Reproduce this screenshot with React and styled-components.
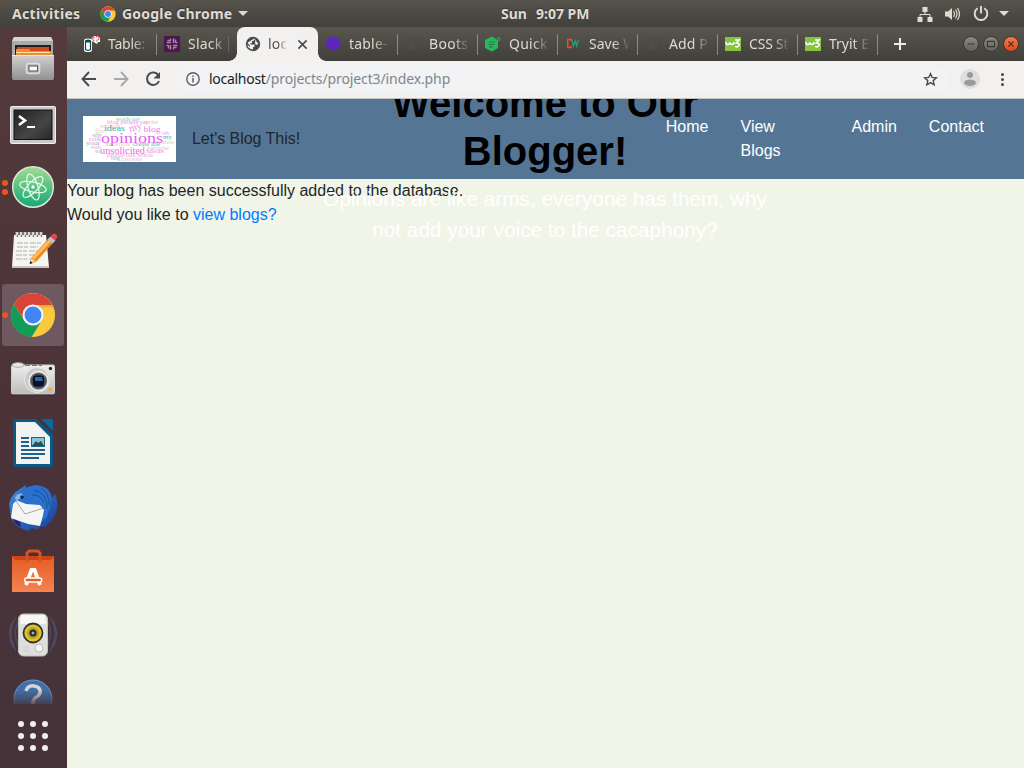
import React from 'react';
import styled, { createGlobalStyle } from 'styled-components';

const Global = createGlobalStyle`
  * { box-sizing: border-box; }
  html, body { margin: 0; height: 100%; overflow: hidden; }
  svg { display: block; flex: none; }
`;
const ui = `"Noto Sans", "Open Sans", sans-serif`;
const arial = `"Liberation Sans", Arial, sans-serif`;

const Desktop = styled.div`
  width: 1024px; height: 768px; display: flex; flex-direction: column; overflow: hidden;
  background: #4a343a; font-family: ${ui};
`;
const TopBar = styled.header`
  height: 27px; flex: none; display: grid; grid-template-columns: 489px 92px 1fr; align-items: center;
  padding: 0 15px 0 12px; background: linear-gradient(#57544c, #41403b);
  color: #dfdbd2; font-size: 14px; font-weight: 700; text-shadow: 0 -1px 1px rgba(0,0,0,.35);
`;
const BarGroup = styled.div`
  display: flex; align-items: center; height: 27px; justify-content: ${p => p.$end ? 'flex-end' : 'flex-start'};
`;
const BarText = styled.span`
  white-space: pre; line-height: 27px; letter-spacing: ${p => p.$ls || 0}px; width: ${p => p.$w}px;
  margin-left: ${p => p.$ml || 0}px; flex: none;
`;
const Clock = styled.div`display: flex;`;
const Caret = styled.i`
  border: 5px solid transparent; border-top-color: #dfdbd2; border-bottom: 0; margin-left: ${p => p.$ml}px;
`;
const Status = styled.div`display: flex; align-items: center; gap: 12px;`;
const Main = styled.div`display: flex; flex: 1; min-height: 0;`;
const Dock = styled.aside`
  width: 67px; flex: none; display: flex; flex-direction: column; padding-top: 1px;
  background: linear-gradient(#543a3b, #4a3238 55%, #45333a);
`;
const DockList = styled.div`
  height: 676px; overflow: hidden; display: flex; flex-direction: column; gap: 2px; padding-left: 2px;
`;
const DockItem = styled.div`
  width: 62px; height: 62px; flex: none; border-radius: 3px; position: relative;
  display: flex; align-items: center; justify-content: center;
  background: ${p => p.$active ? '#6e5960' : 'transparent'};
  mask-image: ${p => p.$faded ? 'linear-gradient(#000 22px, transparent 40px)' : 'none'};
`;
const Running = styled.div`
  position: absolute; left: 0; top: 28px; display: flex; flex-direction: column; gap: 3px;
  margin-top: ${p => p.$two ? -4 : 0}px;
  i { width: 6px; height: 6px; border-radius: 50%; background: #e9541f; }
`;
const AppsGrid = styled.div`
  display: grid; grid-template-columns: repeat(3, 6px); gap: 6px; padding: 17px 0 0 18px;
  i { width: 6px; height: 6px; border-radius: 50%; background: #f2efef; }
`;
const Browser = styled.div`width: 957px; display: flex; flex-direction: column;`;
const TabStrip = styled.div`
  height: 34px; flex: none; display: flex; padding-left: 10px;
  background: linear-gradient(#5a564e, #403f3a);
`;
const TabBox = styled.div`
  width: ${p => p.$active ? 81 : 80}px; height: 34px; padding-left: ${p => p.$active ? 8 : 7}px; display: flex; align-items: center; gap: ${p => p.$active ? 7 : 8}px;
  position: relative; color: ${p => p.$active ? '#55534f' : '#dfdbd2'};
  background: ${p => p.$active ? '#f2f1f0' : 'transparent'};
  border-radius: 8px 8px 0 0; font-size: 14px;
  ${p => p.$active && `
    &::before, &::after { content: ''; position: absolute; bottom: 0; width: 8px; height: 8px; }
    &::before { left: -8px; background: radial-gradient(circle at 0 0, transparent 7.5px, #f2f1f0 8px); }
    &::after { right: -8px; background: radial-gradient(circle at 100% 0, transparent 7.5px, #f2f1f0 8px); }
    z-index: 1;
  `}
`;
const TabText = styled.span`
  flex: none; width: ${p => p.$active ? 22 : 41}px; overflow: hidden; white-space: pre; line-height: 32px; letter-spacing: ${p => p.$ls || 0}px;
  mask-image: linear-gradient(90deg, #000 ${p => p.$active ? 45 : 58}%, transparent ${p => p.$active ? 90 : 100}%);
`;
const TabLine = styled.i`position: absolute; right: 0; top: 7px; width: 1px; height: 21px; background: #8d8a83;
  ${p => p.$dim && 'right: 8px; top: 9px; height: 16px; opacity: .45;'}`;
const NewTab = styled.div`width: 44px; display: flex; align-items: center; justify-content: center;`;
const WindowButtons = styled.div`display: flex; align-items: center; gap: 4px; margin-left: auto; padding-right: 5px;`;
const WinButton = styled.div`
  width: 16px; height: 16px; border-radius: 50%; border: 1px solid #393833;
  background: ${p => p.$close ? 'linear-gradient(#f47c50,#dd4b19)' : 'linear-gradient(#8b8981,#64625c)'};
  display: flex; align-items: center; justify-content: center;
`;
const Toolbar = styled.div`
  height: 38px; flex: none; display: flex; align-items: center; background: #f2f1f0;
  border-bottom: 1px solid #c4c2bf; padding: 0 13px 1px 14px;
`;
const NavIcons = styled.div`display: flex; gap: 16px; margin-right: 14px;`;
const Address = styled.div`
  width: 773px; height: 28px; border-radius: 14px; background: #f1f3f4;
  display: flex; align-items: center; padding: 0 10px 0 11px; font-size: 14px; color: #80868b;
  b { color: #202124; font-weight: 400; letter-spacing: -0.28px; }
  span { margin-left: 9px; flex: 1; white-space: pre; letter-spacing: -0.11px; line-height: 28px; }
`;
const ToolEnd = styled.div`display: flex; align-items: center; gap: 15px; margin-left: auto;`;
const Page = styled.main`
  flex: 1; position: relative; overflow: hidden; background: #f1f5e7; font: 16px/24px ${arial}; color: #212529;
`;
const SiteNav = styled.nav`
  height: 80px; background: #557594; display: flex; align-items: flex-start; padding: 16px 24px 0 16px;
`;
const Brand = styled.div`display: flex; gap: 16px; align-items: center; padding-top: 1px; letter-spacing: -0.03px;`;
const Links = styled.div`display: flex; margin-left: auto; color: #fff;`;
const NavLink = styled.a`padding: 0 16px; width: ${p => p.$w ? p.$w + 'px' : 'auto'};`;
const Hero = styled.section`
  position: absolute; left: 238.5px; top: -20px; width: 479px; text-align: center;
  h1 { margin: 0 60px 8px; font-size: 40px; line-height: 48px; font-weight: 700; color: #000; }
  p { margin: 0; font-size: 20.8px; line-height: 31.2px; color: #fff; padding: 0 10px; }
`;
const Message = styled.div`a { color: #007bff; }`;

const Chrome = ({ s }) => (
  <svg width={s} height={s} viewBox="0 0 48 48">
    <circle cx="24" cy="24" r="23" fill="#fcc93d" />
    <path d="M4.100 12.500A23 23 0 0 1 44.200 13.500H24L14.500 29z" fill="#da4437" />
    <path d="M4.100 12.500A23 23 0 0 0 22.500 47L33 30 24 34.500 15 30z" fill="#119d58" />
    <path d="M24 13.500h20.200l1 2.500H30z" fill="#c49a24" opacity=".5" />
    <circle cx="24" cy="24" r="11" fill="#f5f5f5" />
    <circle cx="24" cy="24" r="8.800" fill="#4285f4" />
  </svg>
);
const Files = () => (
  <svg width="46" height="48" viewBox="0 0 46 48">
    <defs><linearGradient id="metal" x2="0" y2="1"><stop stopColor="#d0d0d0" /><stop offset="1" stopColor="#929292" /></linearGradient></defs>
    <path d="M4 2h37l2 4v37H2V6z" fill="#aaa" /><path d="M4 2h37l2 4H2z" fill="#d5d5d5" />
    <path d="M5 10h36v13H5z" fill="#242020" /><path d="M7 12h32v4H7z" fill="#cf4a1d" />
    <path d="M6 14h13l2 2h20v7H6z" fill="#f28b35" /><path d="M6 17h34v1H6z" fill="#ffe0a2" />
    <path d="M2 20h42v23l-1 2H3l-1-2z" fill="url(#metal)" /><path d="M2 20h42v1H2z" fill="#e9e9e9" />
    <rect x="16.500" y="28.500" width="13" height="10" rx="2" fill="#b9b9b9" stroke="#dedede" strokeWidth="1.500" />
    <rect x="19" y="31" width="8.500" height="5" fill="#fafafa" stroke="#555" />
  </svg>
);
const Terminal = () => (
  <svg width="46" height="42" viewBox="0 -4 46 42"><defs><linearGradient id="term" x2="1" y2="1"><stop stopColor="#222" /><stop offset=".6" stopColor="#454545" /><stop offset="1" stopColor="#292929" /></linearGradient></defs>
    <rect x=".5" y=".5" width="45" height="37" rx="1" fill="#c9c9c9" stroke="#f0f0f0" />
    <rect x="4" y="4" width="38" height="29.500" fill="url(#term)" stroke="#111" />
    <path d="M9 10l6 4.500-6 4.500" fill="none" stroke="#fff" strokeWidth="2.600" /><path d="M17 21h8" stroke="#fff" strokeWidth="2" />
  </svg>
);
const Atom = () => (
  <svg width="44" height="44" viewBox="0 0 44 44"><defs><linearGradient id="atom" x2="0" y2="1"><stop stopColor="#a3dc90" /><stop offset="1" stopColor="#10a875" /></linearGradient></defs>
    <circle cx="22" cy="22" r="20.300" fill="url(#atom)" stroke="#e1e3dd" strokeWidth="1.500" />
    <g fill="none" stroke="#e9fbef" strokeWidth="1.200">
      <ellipse cx="22" cy="22" rx="13.500" ry="5" transform="rotate(13 22 22)" />
      <ellipse cx="22" cy="22" rx="13.500" ry="5" transform="rotate(73 22 22)" />
      <ellipse cx="22" cy="22" rx="13.500" ry="5" transform="rotate(133 22 22)" />
    </g><circle cx="22" cy="22" r="1.700" fill="#fff" />
  </svg>
);
const Notes = () => (
  <svg width="48" height="40" viewBox="0 0 48 40">
    <path d="M5 4h32l3 32H3z" fill="#f5f5f2" /><path d="M3 35h37v2H3z" fill="#c5c5bf" />
    <path d="M8 1v5m4-5v5m4-5v5m4-5v5m4-5v5m4-5v5m4-5v5" stroke="#d5d5d2" strokeWidth="2.800" /><path d="M8 5h26" stroke="#777" strokeDasharray="1 3" strokeWidth="2" />
    <path d="M8 12h24M8 16h21M7 20h22M7 24h18M7 28h20" stroke="#b0b0b0" strokeDasharray="6 1 4 2" />
    <path d="M22 27L40 7l5 4-18 20-6 2z" fill="#e98a28" /><path d="M24 27.500L42 8.500" stroke="#ffbd59" strokeWidth="3" />
    <path d="M38.500 8.500l3-3 5 4-3 3z" fill="#bcc2c3" /><path d="M41.500 5.500l3-3q4 0 4 4l-2.500 3z" fill="#ed4149" />
    <path d="M22 27l5 3.500-6 2z" fill="#f6d29d" /><path d="M20.500 33l1-3 2 2z" fill="#111" />
  </svg>
);
const Camera = () => (
  <svg width="46" height="34" viewBox="0 1 46 34"><defs><linearGradient id="cam" x2="0" y2="1"><stop stopColor="#eee" /><stop offset="1" stopColor="#bcbcba" /></linearGradient></defs>
    <rect x="1.500" y="4" width="43" height="29" rx="1.500" fill="url(#cam)" stroke="#d0d0ce" /><path d="M2 34h42" stroke="#2d2325" opacity=".5" />
    <ellipse cx="8" cy="4" rx="6" ry="2.300" fill="#e7e7e5" stroke="#aaa" /><path d="M15 4.500h17" stroke="#777" strokeDasharray="5 2" />
    <circle cx="27" cy="19" r="12.500" fill="#c9c9c7" stroke="#e8e8e6" /><circle cx="28.500" cy="20" r="9.500" fill="#77797a" stroke="#f0f0f0" strokeWidth="1.500" /><circle cx="28.500" cy="20" r="7.500" fill="#45494e" />
    <rect x="23" y="14.500" width="11" height="11" rx="3" fill="#07122a" /><path d="M25 16h7l1 4h-8z" fill="#28689d" />
    <circle cx="40.500" cy="7.500" r="1.700" fill="#222" /><path d="M38.500 27h3v3h-3z" fill="#f4a738" />
  </svg>
);
const Writer = () => (
  <svg width="40" height="48" viewBox="0 0 40 48">
    <path d="M0 2q0-2 2-2h21l17 15v31q0 2-2 2H2q-2 0-2-2z" fill="#0c5885" /><path d="M28 0h10q2 0 2 2v10z" fill="#0769a2" />
    <path d="M3 3h19l15 15v27H3z" fill="#f1f3f2" />
    <path d="M8 19h8m-8 4h8m-8 4h8m-8 4h24m-24 4h24m-24 4h18" stroke="#1d6088" strokeWidth="1.800" />
    <path d="M18 18h14v10H18z" fill="#1c6689" /><path d="M19 19h12v7H19z" fill="#85c4dd" /><path d="M19 27l4-5 2 2 3-2 3 5z" fill="#344c42" /><circle cx="30" cy="20" r="1" fill="#e6bd35" />
  </svg>
);
const Bird = () => (
  <svg width="50" height="48" viewBox="0 0 50 48"><defs><linearGradient id="bird" x2="1" y2="1"><stop stopColor="#438ade" /><stop offset="1" stopColor="#153f98" /></linearGradient></defs>
    <path d="M1 21Q3 11 12 6l6-4v3q9-5 18-1 7 3 8 11l3-4q4 8 1 19l-5 9-3 1-2 4-5-1-3 4-6-2-4 3Q8 45 3 35z" fill="url(#bird)" />
    <path d="M5 21L10 16 33 20 37 26 32 43 20 41 3 35z" fill="#f5f5f4" /><path d="M8 18l9 13 19-6" fill="none" stroke="#a5a9ac" />
    <path d="M8 17l3-9 7-6v3Q28 0 37 5q8 5 6 15l-4 14-5 5 2-12-4-5-14-1z" fill="#2a70cc" />
    <path d="M24 12q9-1 12 8M26 7q14 3 13 19M33 5q9 7 8 17" stroke="#174896" fill="none" strokeWidth=".8" />
    <path d="M8 18l-1-4q2-3 6-4l3 3z" fill="#88b8e7" /><circle cx="14" cy="14" r="1.800" fill="#122334" />
    <path d="M5 36l7 3 1 5Q7 42 5 36z" fill="#28206c" />
  </svg>
);
const Bag = () => (
  <svg width="44" height="44" viewBox="0 0 44 44"><defs><linearGradient id="bag" x2="0" y2="1"><stop stopColor="#e45c23" /><stop offset="1" stopColor="#f58350" /></linearGradient></defs>
    <path d="M1 7h42v36H1z" fill="url(#bag)" /><path d="M1 7h42l-3 4H4z" fill="#cb4516" />
    <path d="M16 13V4l2-2h9l2 2v9" fill="none" stroke="#d95223" strokeWidth="3" />
    <path d="M15 36L20.500 21h3L29 36" fill="none" stroke="#fff" strokeWidth="3.800" /><rect x="13.700" y="29" width="17" height="4" rx="2" fill="#ee5b20" stroke="#fff" strokeWidth="1.500" />
  </svg>
);
const Speaker = () => (
  <svg width="48" height="46" viewBox="0 0 48 46">
    <path d="M7 5q-10 14 0 34M4 9q-7 12 0 26m37-30q10 15 0 34m3-30q7 13 0 26M10 8q-7 12 0 28m28-28q7 12 0 28" fill="none" stroke="#4c5877" strokeWidth="1.200" opacity=".75" />
    <rect x="9.500" y="2" width="29" height="42" rx="5" fill="#dedfdc" stroke="#c0c0bd" /><path d="M12 3h24l1 9H11z" fill="#f7f7f4" />
    <circle cx="24" cy="21" r="9.500" fill="#e1c625" stroke="#333" strokeWidth="1.800" /><circle cx="24" cy="21" r="6" fill="#baa325" /><circle cx="24" cy="21" r="3.500" fill="#252a2e" /><circle cx="24" cy="21" r="1.500" fill="#aaa" />
    <circle cx="30" cy="36" r="4" fill="#f6f6f4" stroke="#bbb" /><rect x="15" y="35" width="4" height="4" fill="none" stroke="#ccc" />
  </svg>
);
const Help = () => (
  <svg width="42" height="42" viewBox="0 0 42 42"><circle cx="21" cy="21" r="19" fill="#426fa9" stroke="#6f9bc9" /><path d="M14 13q2-6 8-5 7 1 6 7-1 3-5 5l-2 3v3" fill="none" stroke="#d7d4d4" strokeWidth="3.500" /></svg>
);

const small = [
  [33, 4.5, 24, 'words say', '#88c5b5'], [24, 8, 42, 'blog people say', '#f08fe0'], [17, 12, 20, 'voice', '#ecc0b8'], [61, 7.5, 14, 'write', '#ecc0b8'],
  [12, 16.5, 9, 'for', '#ecc0b8'], [79, 18.5, 7, 'sh', '#f0a8e5'], [9, 20.5, 10, 'why', '#85c0ae'], [6, 24.5, 12, 'talk', '#f093e5'],
  [3, 28.5, 14, 'your', '#85c0ae'], [80, 23, 9, 'my', '#65b29f'], [79, 27.5, 12, 'ideas', '#ecc0b8'], [8, 32.5, 10, 'words', '#f093e5'],
  [22, 30, 25, 'the words', '#ecc0b8'], [50, 30, 27, 'create life', '#65b29f'], [64, 33.5, 22, 'people', '#ecc0b8'], [63, 37.3, 18, 'ideas', '#f093e5'],
  [12, 37, 5, 'so', '#85c0ae'], [24, 41.3, 46, 'people talk words', '#f0a0e5'], [38, 44.6, 21, 'favorite', '#ecc0b8'], [28, 44, 9, 'blog', '#85c0ae'],
];
const Word = props => <text lengthAdjust="spacingAndGlyphs" {...props} />;
const Cloud = () => (
  <svg width="93" height="46" viewBox="0 0 93 46"><rect width="93" height="46" fill="#fff" />
    <g fontFamily="Liberation Serif, serif">
      <g fontSize="5.200">
        {small.map(([x, y, w, t, c], i) => <Word key={i} x={x} y={y} fill={c} textLength={w}>{t}</Word>)}
      </g>
      <Word x="21" y="15" fontSize="8.500" fill="#4fa994" textLength="21">ideas</Word>
      <Word x="60.500" y="15.500" fontSize="8.500" fill="#ec80ec" textLength="17">blog</Word>
      <Word x="46" y="15" fontSize="10" fill="#f47aec" transform="rotate(-18 50 12)">my</Word>
      <Word x="18" y="26.500" fontSize="14.500" fill="#e85cf2" textLength="62">opinions</Word>
      <Word x="17" y="37.500" fontSize="9.500" fill="#ee68e4" textLength="45">unsolicited</Word>
    </g>
  </svg>
);

const Globe = ({ c = '#48494a', bg = '#f2f1f0' }) => <svg width="16" height="16" viewBox="0 0 16 16"><circle cx="8" cy="8" r="7.200" fill={c} /><path d="M9.500 2.300v1.500q-1 1.500-2.500 1.200V7H5.500v1.500h4V11H8v2.500Q3 13 2.300 8.500L5 11V9.500L3.500 8 2.500 6.700M10.500 3l1 2.500 2 2.500-2.500 1-1-1.500" fill={bg} /></svg>;
const favicons = {
  table: <svg width="16" height="16" viewBox="0 0 16 16"><path d="M0 4.500Q0 2.500 4 2.500t4 2V14q0 2-4 2t-4-2z" fill="#fff" /><path d="M1.500 5v8.500q2.500 1.500 5 0V5" fill="#fff" stroke="#0c4750" strokeWidth="1.200" /><ellipse cx="4" cy="5" rx="3" ry="1.500" fill="#0d4850" /><path d="M7 3l3-3h4l2 2v4h-2l-1 2-5-3z" fill="#fff" /><path d="M10.500 1L8.500 3l2 2M12 1q3-1 3 1t-2 2v2" stroke="#f01824" fill="none" strokeWidth="1.100" strokeDasharray="1.300 .7" /></svg>,
  slack: <svg width="16" height="16" viewBox="0 0 16 16"><path d="M0 0h16v16H0z" fill="#4b164c" /><path d="M6.500 3v.500M9.500 3v3.500M3 6.500h3.500M12.500 6.500h.500M3 9.500h.500M9.500 9.500H13M6.500 9.500V13M9.500 12.500v.500M4 4.500h2.500M11.500 4v2.500M4.500 9.500V12M9.500 11.500H12" stroke="#a783a6" strokeWidth="1.500" fill="none" strokeLinecap="round" /></svg>,
  globe: <Globe />,
  dark: <Globe c="#4a4a48" bg="#514f4a" />,
  layers: <svg width="16" height="16" viewBox="0 0 16 16"><path d="M8 0l8 4-2 1.500L16 7l-2 1.500 2 1.500-8 5-8-5 2-1.500L0 7l2-1.500L0 4z" fill="#5d28bd" /><path d="M2 5.500l6 3 6-3m-12 3l6 3 6-3" fill="none" stroke="#5324ab" strokeWidth=".5" /></svg>,
  quick: <svg width="16" height="16" viewBox="0 0 16 16"><path d="M7 .5l3 2L13 5v7l-6 3.500L0 12V4z" fill="#24b95e" /><path d="M4 6h6M3.500 8.500h6M4 11h4" stroke="#28724a" /><circle cx="13.700" cy="3" r="1.500" fill="none" stroke="#24b95e" /></svg>,
  cw: <svg width="16" height="16" viewBox="0 0 16 16"><path d="M6 5V3.500H2.700v8H6V10" stroke="#fa4b20" strokeWidth="1.400" fill="none" /><path d="M6.500 3.500l2 6.500 1.700-5 1.500 5L13.500 3.500" stroke="#21a080" strokeWidth="1.300" fill="none" /></svg>,
  w3: <svg width="16" height="16" viewBox="0 0 16 16"><path d="M0 1h16v14H0z" fill="#83c441" /><path d="M1 6q0 3 2 2.500T5 6.500q0 2 2 2t2-2.500m1-2h4l-2.500 3q3 0 2.500 2.500-1 2-4 1" stroke="#fff" strokeWidth="1.600" fill="none" /></svg>,
};
const tabs = [
  ['table', 'Table:', -.25], ['slack', 'Slack', .2], ['globe', 'loca', .2], ['layers', 'table-', .2], ['dark', 'Boots', .3],
  ['quick', 'Quick', .25], ['cw', 'Save W', 0], ['dark', 'Add P', .1], ['w3', 'CSS St', -.2], ['w3', 'Tryit E', 0],
];
const dock = [Files, Terminal, Atom, Notes, () => <Chrome s={46} />, Camera, Writer, Bird, Bag, Speaker, Help];
const Stroke = ({ d, c = '#484a4d', s = 16, w = 2 }) => <svg width={s} height={s} viewBox="0 0 16 16"><path d={d} fill="none" stroke={c} strokeWidth={w} /></svg>;

export default function App() {
  return (
    <Desktop>
      <Global />
      <TopBar>
        <BarGroup>
          <BarText $w={88} $ls={0.35}>Activities</BarText><Chrome s={16} />
          <BarText $w={111} $ml={6} $ls={0.22}>Google Chrome</BarText><Caret $ml={5} />
        </BarGroup>
        <Clock><BarText $w={35}>Sun</BarText><BarText $w={56}>9:07 PM</BarText></Clock>
        <BarGroup $end>
          <Status>
            <svg width="16" height="16" viewBox="0 0 16 16"><path d="M5.500 1h5v5h-5zM.5 11h5v5h-5zM10.500 11h5v5h-5z" fill="#dfdbd2" /><path d="M8 6v2.500M3 11V8.500h10V11" fill="none" stroke="#dfdbd2" /></svg>
            <svg width="16" height="16" viewBox="0 0 16 16"><path d="M0 5.500h3L7 2v12l-4-3.500H0z" fill="#dfdbd2" /><path d="M8.500 5q2 3 0 6M10.500 3.500q3 4.500 0 9M12.500 2q4 6 0 12" fill="none" stroke="#dfdbd2" strokeWidth="1.200" /></svg>
            <svg width="16" height="16" viewBox="0 0 16 16"><path d="M4.700 2.300a6.300 6.300 0 1 0 6.600 0M8 0v7.500" fill="none" stroke="#dfdbd2" strokeWidth="1.900" /></svg>
          </Status>
          <Caret $ml={10} />
        </BarGroup>
      </TopBar>
      <Main>
        <Dock>
          <DockList>
            {dock.map((Icon, i) => (
              <DockItem key={i} $active={i === 4} $faded={i === 10}>
                {(i === 2 || i === 4) && <Running $two={i === 2}><i />{i === 2 && <i />}</Running>}
                <Icon />
              </DockItem>
            ))}
          </DockList>
          <AppsGrid>{Array.from({ length: 9 }, (_, i) => <i key={i} />)}</AppsGrid>
        </Dock>
        <Browser>
          <TabStrip>
            {tabs.map(([icon, text, ls], i) => (
              <TabBox key={i} $active={i === 2}>
                {favicons[icon]}<TabText $active={i === 2} $ls={ls}>{text}</TabText>
                {i === 2 ? <Stroke s={11} d="M2 2l12 12M14 2L2 14" w={2.3} /> : <TabLine $dim={i === 1} />}
              </TabBox>
            ))}
            <NewTab><Stroke s={12} c="#eeece7" d="M8 0v16M0 8h16" w={2.8} /></NewTab>
            <WindowButtons>
              <WinButton><Stroke s={14} c="#393833" d="M4 8h8" w={1.2} /></WinButton>
              <WinButton><Stroke s={14} c="#393833" d="M4 5h8v6H4z" w={1.2} /></WinButton>
              <WinButton $close><Stroke s={14} c="#51291c" d="M5 5l6 6m0-6l-6 6" w={1.4} /></WinButton>
            </WindowButtons>
          </TabStrip>
          <Toolbar>
            <NavIcons>
              <Stroke d="M15 8H2M8 1L1.500 8 8 15" w={1.9} /><Stroke c="#a8a8a8" d="M1 8h13M8 1l6.500 7L8 15" w={1.9} />
              <svg width="16" height="16" viewBox="0 0 16 16"><path d="M13.500 4.500A6.200 6.200 0 1 0 14 10" fill="none" stroke="#484a4d" strokeWidth="2" /><path d="M15 1v6.500H8.500z" fill="#484a4d" /></svg>
            </NavIcons>
            <Address>
              <svg width="14" height="14" viewBox="0 0 14 14"><circle cx="7" cy="7" r="6.200" fill="none" stroke="#5c5f63" strokeWidth="1.400" /><path d="M7 6v4.500M7 3.500V5" stroke="#5c5f63" strokeWidth="1.500" /></svg>
              <span><b>localhost</b>/projects/project3/index.php</span>
              <Stroke s={15} d="M8 1.800l1.800 4 4.500.4-3.400 3 1 4.400L8 11.300l-3.900 2.300 1-4.400-3.400-3 4.500-.4z" w={1.5} />
            </Address>
            <ToolEnd>
              <svg width="20" height="20" viewBox="0 0 20 20"><circle cx="10" cy="10" r="10" fill="#dedede" /><circle cx="10" cy="6" r="3" fill="#9b9b9b" /><ellipse cx="10" cy="13.700" rx="6" ry="3.200" fill="#9b9b9b" /></svg>
              <svg width="16" height="16" viewBox="0 0 16 16" fill="#484a4d"><circle cx="7.500" cy="3.500" r="1.500" /><circle cx="7.500" cy="8.500" r="1.500" /><circle cx="7.500" cy="13.500" r="1.500" /></svg>
            </ToolEnd>
          </Toolbar>
          <Page>
            <SiteNav>
              <Brand><Cloud /><span>Let's Blog This!</span></Brand>
              <Links><NavLink>Home</NavLink><NavLink $w={111}>View<br />Blogs</NavLink><NavLink>Admin</NavLink><NavLink>Contact</NavLink></Links>
            </SiteNav>
            <Message>Your blog has been successfully added to the database.<br />Would you like to <a>view blogs?</a></Message>
            <Hero><h1>Welcome to Our Blogger!</h1><p>Opinions are like arms, everyone has them, why not add your voice to the cacaphony?</p></Hero>
          </Page>
        </Browser>
      </Main>
    </Desktop>
  );
}
